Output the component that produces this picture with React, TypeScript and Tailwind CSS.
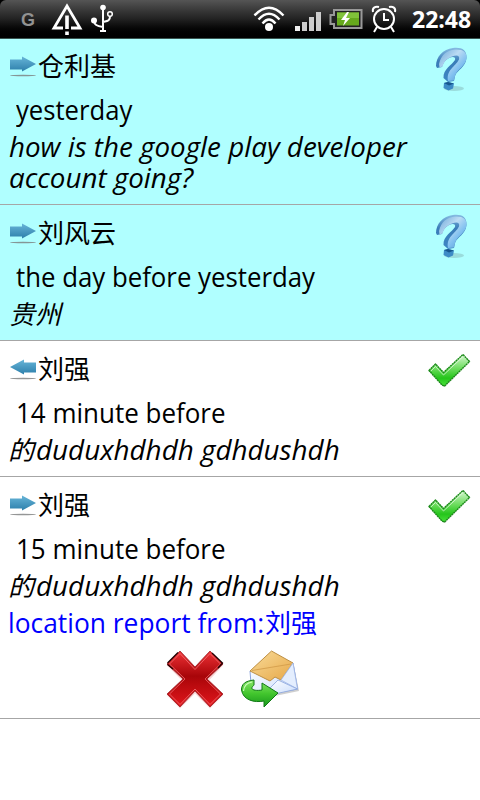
import React from "react";

const font = "font-['Open_Sans','Noto_Sans_CJK_SC',sans-serif]";

function Arrow({ left, id }: { left?: boolean; id: string }) {
  return (
    <svg className="h-[30px] w-[26px] shrink-0" viewBox="0 0 26 30">
      <defs>
        <linearGradient id={id} x1="0" y1="0" x2="0" y2="1">
          <stop offset="0" stopColor="#67b5d8" />
          <stop offset="1" stopColor="#2d7fab" />
        </linearGradient>
      </defs>
      <path
        d="M0 9.5H12V6.500L26 14L12 21.500V19.500H0Z"
        fill={`url(#${id})`}
        transform={left ? "translate(26 0) scale(-1 1)" : undefined}
      />
      <ellipse cx="13" cy="25.500" rx="13" ry="0.7" fill="#7b7c7c" opacity="0.8" />
    </svg>
  );
}

function Question({ id }: { id: string }) {
  return (
    <svg className="h-[46px] w-[40px]" viewBox="0 0 40 46">
      <defs>
        <linearGradient id={id} x1="0" y1="0" x2="1" y2="1">
          <stop offset="0" stopColor="#6fa8d8" />
          <stop offset="0.4" stopColor="#bcdcf4" />
          <stop offset="0.65" stopColor="#80c0f0" />
          <stop offset="1" stopColor="#4a90c8" />
        </linearGradient>
        <linearGradient id={`${id}s`} x1="0" y1="0" x2="0" y2="1">
          <stop offset="0" stopColor="#86bbe2" />
          <stop offset="0.4" stopColor="#3a7cb8" />
          <stop offset="1" stopColor="#3d87c4" />
        </linearGradient>
      </defs>
      <ellipse cx="19" cy="41.500" rx="10" ry="2.500" fill="#739b9b" opacity="0.35" />
      <path d="M1 19C1 10 8 2 18 1C27 0 32 3 31.500 11C31 20 22 23 20 29L19 34L13 35L8.500 31C8 22 17 18 20 13C21 10 18 9 14 11C10 13 8 16 7 20L2 21Z" fill={`url(#${id}s)`} />
      <path d="M4 17C6 8 12 3 20 2.500C28 2 32 5 31.500 11C31 19 22 22 20 29L19 33.500L13 34C11 23 20 20 24 12.500C25 8.500 22 7.500 17 9.500C11 12 9 15 7.500 19.500L4.500 20.500Z" fill={`url(#${id})`} />
      <path d="M9 36L13 35L19 36.500L18 41.500L13.500 43.500L8.500 41Z" fill="#3d8bc6" />
      <path d="M9 36L13 35L19 36.500L14 38.500Z" fill="#17568e" />
    </svg>
  );
}

function Check({ id }: { id: string }) {
  return (
    <svg className="h-[36px] w-[44px]" viewBox="0 0 44 36">
      <defs>
        <linearGradient id={id} x1="0" y1="0" x2="0" y2="1">
          <stop offset="0" stopColor="#d7f7d2" />
          <stop offset="0.45" stopColor="#6bdc5c" />
          <stop offset="0.75" stopColor="#25c51b" />
          <stop offset="1" stopColor="#4be23c" />
        </linearGradient>
      </defs>
      <path d="M3 18.500L9 11.500L16.500 20L36 1.500L43 8.500L18 34L15 32Z" fill="#999" opacity="0.4" />
      <path d="M2 17.500L8.500 11L16.500 19.500L36 1.500L42.500 8.500L17.500 33L15 32Z" fill={`url(#${id})`} stroke="#1b8a19" strokeWidth="1.400" strokeDasharray="2 0.5" strokeLinejoin="round" />
      <path d="M4 18L8.500 13.500L16.500 22L36 3.500" fill="none" stroke="#fff" strokeOpacity="0.6" strokeWidth="1" />
    </svg>
  );
}

function DeleteIcon() {
  return (
    <svg className="h-[60px] w-[60px]" viewBox="0 0 60 60">
      <defs>
        <linearGradient id="del" x1="0" y1="0" x2="0" y2="1">
          <stop offset="0" stopColor="#ee3236" />
          <stop offset="0.45" stopColor="#a80509" />
          <stop offset="0.6" stopColor="#b90a0e" />
          <stop offset="1" stopColor="#e0161c" />
        </linearGradient>
      </defs>
      <path d="M3 16L15 4L30 19L45 4L57 16L43 31L57 46L45 58L30 43L15 58L3 46L18 31Z" fill="#d77" opacity="0.4" stroke="#e99" strokeWidth="2" />
      <path d="M2 15L15 2L30 18L45 2L58 15L42 30L58 45L45 58L30 42L15 58L2 45L18 30Z" fill="url(#del)" stroke="#9a2529" strokeWidth="0.8" strokeLinejoin="round" />
      <path d="M4.500 15L15 4.500L30 20.500L45 4.500L55.500 15L40 30L55.500 45L45 55.500L30 40L15 55.500L4.500 45L20 30Z" fill="none" stroke="#ff8d90" strokeOpacity="0.6" strokeWidth="1" />
      <path d="M2.500 15.500L8 20M2.500 14L13 3.500M47 4L57.500 14L53 19" fill="none" stroke="#240002" strokeWidth="1.300" />
    </svg>
  );
}

function ForwardMail() {
  return (
    <svg className="h-[60px] w-[60px]" viewBox="0 0 60 60">
      <defs>
        <linearGradient id="env" x1="0" y1="0" x2="1" y2="1">
          <stop offset="0" stopColor="#f9dc9a" />
          <stop offset="1" stopColor="#e6a747" />
        </linearGradient>
        <linearGradient id="paper" x1="0" y1="0" x2="1" y2="1">
          <stop offset="0" stopColor="#ffffff" />
          <stop offset="1" stopColor="#c9dcfc" />
        </linearGradient>
        <linearGradient id="grn" x1="0" y1="0" x2="0" y2="1">
          <stop offset="0" stopColor="#8ae66a" />
          <stop offset="0.5" stopColor="#43c62e" />
          <stop offset="1" stopColor="#16961b" />
        </linearGradient>
      </defs>
      <path d="M12 24L54 17L59 42L20 50Z" fill="#888" opacity="0.4" />
      <path d="M10 22L53 14L57.500 40L12 48Z" fill="url(#paper)" stroke="#8aa4dc" />
      <path d="M10 22L31.500 2L53 14L41 31L35 28L30 32Z" fill="url(#env)" stroke="#bd8f43" strokeLinejoin="round" />
      <path d="M12 21.500L51 15" stroke="#d19a49" strokeWidth="0.8" />
      <path d="M41 31L53 14L57.500 40Z" fill="#e4eefe" stroke="#9fb6e6" strokeWidth="0.8" />
      <path d="M28 41L38 31L57.500 40L30 46Z" fill="url(#paper)" stroke="#8aa4dc" strokeWidth="0.8" />
      <path d="M14 31C5 32 1.500 35 1.500 41C3 51 14 54 24 52V58L38 44L22 34V41C16 42 11 41 12 38.500C12.500 37 14 36.500 14 36Z" fill="url(#grn)" stroke="#117a16" strokeLinejoin="round" />
      <path d="M12 33C6 34 4 37 3.500 42" stroke="#cbffba" strokeWidth="1.200" fill="none" />
    </svg>
  );
}

function StatusBar() {
  return (
    <header className="relative z-10 h-[39px] bg-black">
      <div className="flex h-[39px] items-center rounded-t-[6px] border-b border-[#39534f] bg-linear-to-b from-[#555] via-[#222] via-50% to-black">
        <span className="ml-[21px] mt-[2px] w-[15px] font-['Liberation_Sans',sans-serif] text-[18px] font-bold leading-none text-[#929292]">G</span>
        <svg className="ml-[14px] h-[34px] w-[34px]" viewBox="0 0 34 34" fill="none" stroke="#fff">
          <path d="M13 26H4L17 4L30 26H21" strokeWidth="2.800" />
          <path d="M17 13.500V27M17 29.500V33" strokeWidth="3.600" />
        </svg>
        <svg className="ml-[6px] h-[32px] w-[24px]" viewBox="0 0 24 32" fill="none" stroke="#fff" strokeWidth="2">
          <circle cx="13" cy="4.500" r="2.800" fill="#fff" stroke="none" />
          <path d="M13 3V28M10 28H16M4 17C4 22 7 23 13 24M20 13C20 18 18 18 13 19" />
          <circle cx="4" cy="17.500" r="3" fill="#fff" stroke="none" />
          <circle cx="20" cy="11" r="2.300" strokeWidth="1.500" />
        </svg>
        <svg className="ml-[139px] h-[26px] w-[32px]" viewBox="0 0 32 26" fill="none" stroke="#fff" strokeWidth="2.400">
          <path d="M1.500 9.500Q16-6 30.500 9.500M5.500 13.500Q16 2 26.500 13.500M9.500 17.500Q16 9.500 22.500 17.500" />
          <circle cx="16" cy="21" r="4" fill="#fff" stroke="none" />
        </svg>
        <svg className="ml-[9px] mt-[5px] h-[20px] w-[28px]" viewBox="0 0 28 20">
          <path d="M1 14H6V19H1Z" fill="#eee" />
          <path d="M8 10H13V19H8ZM15 5H20V19H15ZM22 0H27V19H22Z" fill="#ccc" />
        </svg>
        <svg className="ml-[6px] h-[20px] w-[35px]" viewBox="0 0 35 20">
          <path d="M6 1H33.500V19H6V15H2.500V6H6Z" fill="#222" stroke="#999" strokeWidth="2" />
          <path d="M9 3.500H31V16.500H9Z" fill="#66a91c" />
          <path d="M9 3.500H31V9H9Z" fill="#80c239" />
          <path d="M19 3L13 11H17L15 17L22 9H18L21 3Z" fill="#fff" />
        </svg>
        <svg className="ml-[8px] h-[28px] w-[26px]" viewBox="0 0 26 28" fill="none" stroke="#fff" strokeWidth="2">
          <circle cx="13" cy="14" r="10" />
          <path d="M13 8V15H18M6 22L3 27M20 22L23 27M2 7C1 3 4 1 8 2M24 7C25 3 22 1 18 2" />
        </svg>
        <span className={`ml-[15px] text-[23px] font-bold leading-none text-white ${font}`}>22:48</span>
      </div>
    </header>
  );
}

type ItemProps = {
  id: string;
  name: string;
  time: string;
  timeScale?: string;
  message: React.ReactNode;
  unread?: boolean;
  incoming?: boolean;
  children?: React.ReactNode;
};

function Item({ id, name, time, timeScale = "scale-x-[0.962]", message, unread, incoming, children }: ItemProps) {
  return (
    <li className={`flex flex-col border-b border-[#a6a6a6] pb-[11px] ${unread ? "bg-[#b0ffff]" : "bg-white"}`}>
      <div className="flex h-[53px] justify-between pl-[10px] pr-[9px] pt-[12px]">
        <div className="flex h-[30px] items-center">
          <Arrow id={`a${id}`} left={incoming} />
          <span className="ml-[2px] mt-[2px] text-[26px] leading-[30px]">{name}</span>
        </div>
        <div className={unread ? "-mt-[3px] -mr-[4px]" : ""}>
          {unread ? <Question id={`q${id}`} /> : <Check id={`c${id}`} />}
        </div>
      </div>
      <div className="h-[37px] pl-[16px] text-[27px] leading-[37px]">
        <span className={`inline-block origin-left ${timeScale}`}>{time}</span>
      </div>
      <div className="flex flex-col items-start whitespace-nowrap pl-[9px] pt-[3px] text-[27px] italic leading-[31px]">
        {message}
      </div>
      {children}
    </li>
  );
}

function MixedMessage() {
  return (
    <div className="flex h-[31px]">
      <span className="-ml-px pt-px text-[26px]">的</span>
      <span className="ml-[2px] origin-left scale-x-[1.03]">duduxhdhdh gdhdushdh</span>
    </div>
  );
}

export default function App() {
  return (
    <div className={`h-[800px] w-[480px] overflow-hidden bg-white text-black ${font}`}>
      <StatusBar />
      <ul className="-mt-px">
        <Item
          id="1"
          name="仓利基"
          time="yesterday"
          timeScale="scale-x-[0.95]"
          message={
            <>
              <span className="origin-left scale-x-[1.028]">how is the google play developer</span>
              <span className="origin-left scale-x-[1.028]">account going?</span>
            </>
          }
          unread
        />
        <Item id="2" name="刘风云" time="the day before yesterday" timeScale="scale-x-[0.955]" message={<span className="-mb-px pt-px text-[26px]">贵州</span>} unread />
        <Item id="3" name="刘强" time="14 minute before" message={<MixedMessage />} incoming />
        <Item id="4" name="刘强" time="15 minute before" message={<MixedMessage />}>
          <div className="flex h-[39px] items-center whitespace-nowrap pl-[8px] pt-[5px] text-[27px] leading-[34px] text-[#0000ff]">
            <span className="w-[257px]">
              <span className="inline-block origin-left scale-x-[0.977]">location report from:</span>
            </span>
            <span className="text-[26px]">刘强</span>
          </div>
          <div className="-mb-[2px] flex h-[69px] items-end justify-center gap-[15px] pr-[15px]">
            <DeleteIcon />
            <ForwardMail />
          </div>
        </Item>
      </ul>
    </div>
  );
}
